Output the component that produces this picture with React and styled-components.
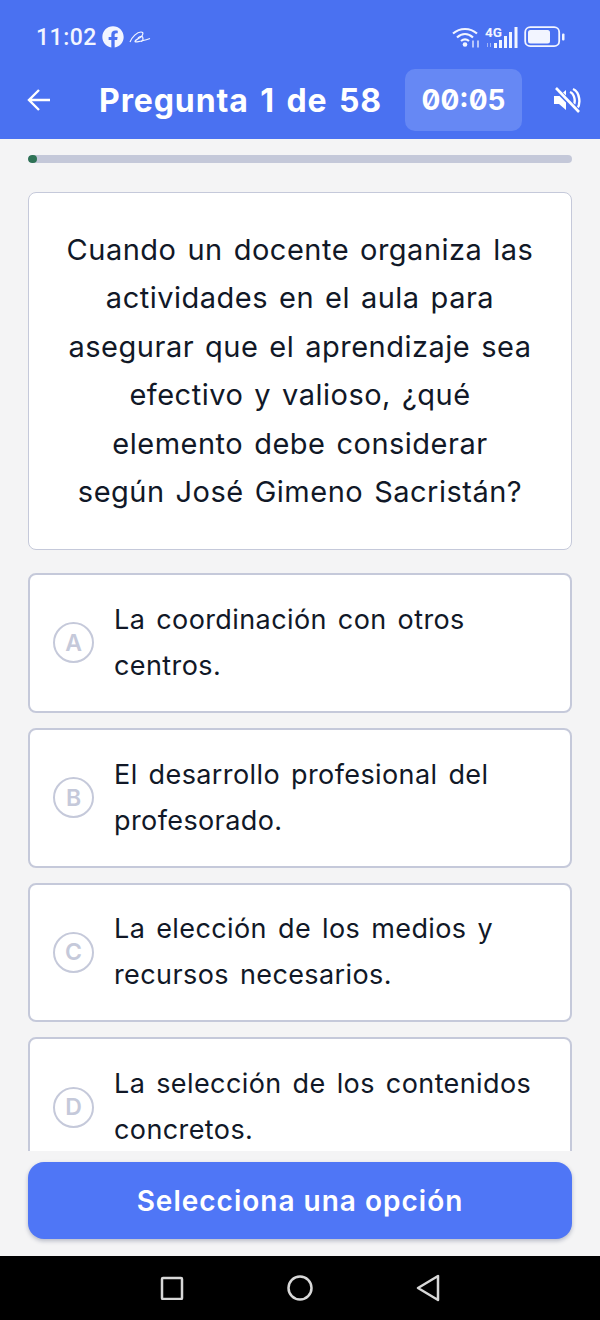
import React from "react";
import styled, { createGlobalStyle } from "styled-components";
import { FaFacebook } from "react-icons/fa";

const Global = createGlobalStyle`
  html, body {
    margin: 0;
    padding: 0;
    background: #f4f4f5;
  }
  * { box-sizing: border-box; }
`;

const Page = styled.div`
  width: 600px;
  height: 1320px;
  display: flex;
  flex-direction: column;
  background: #f4f4f5;
  font-family: Inter, "Liberation Sans", sans-serif;
  overflow: hidden;
`;

const Top = styled.header`
  height: 139px;
  background: #4a71f1;
  color: #fff;
  flex: none;
`;

const StatusBar = styled.div`
  height: 69px;
  padding: 5px 35px 0 36px;
  display: flex;
  align-items: center;
  font-family: Roboto, sans-serif;
  color: #f2f5ff;
`;

const Clock = styled.span`
  font-size: 23px;
  font-weight: 500;
  letter-spacing: 0.5px;
  margin-right: 5px;
`;

const StatusRight = styled.div`
  margin-left: auto;
  display: flex;
  align-items: center;
  gap: 5px;
`;

const TitleRow = styled.div`
  height: 62px;
  display: flex;
  align-items: center;
  padding-left: 26px;
`;

const Title = styled.h1`
  margin: 0 0 0 47px;
  width: 306px;
  font-size: 32px;
  font-weight: 700;
  letter-spacing: 0.9px;
  word-spacing: 3px;
  white-space: nowrap;
`;

const Timer = styled.div`
  width: 117px;
  height: 62px;
  border-radius: 10px;
  background: #6688f4;
  display: flex;
  align-items: center;
  justify-content: center;
  font-size: 28px;
  font-weight: 700;
  font-variant-numeric: slashed-zero;
  font-feature-settings: "zero" 1;
`;

const Sound = styled.div`
  margin-left: 31px;
  display: flex;
`;

const Body = styled.main`
  flex: 1;
  min-height: 0;
  padding: 16px 28px 0;
  overflow: hidden;
`;

const Progress = styled.div`
  height: 8px;
  border-radius: 4px;
  background: #c4c8d9;
  overflow: hidden;
  margin-bottom: 29px;
`;

const ProgressFill = styled.div`
  height: 100%;
  background: #2f7356;
  border-radius: 4px;
`;

const Question = styled.section`
  height: 358px;
  background: #fff;
  border: 1px solid #c5c9da;
  border-radius: 8px;
  display: flex;
  align-items: center;
  justify-content: center;
  text-align: center;
  padding: 0 36px;
  font-size: 29px;
  letter-spacing: 0.5px;
  word-spacing: 2.3px;
  line-height: 48.5px;
  color: #111827;
  margin-bottom: 23px;
`;

const Options = styled.div`
  display: flex;
  flex-direction: column;
  gap: 15px;
`;

const Option = styled.div`
  height: 139.8px;
  flex: none;
  background: #fff;
  border: 2.5px solid #c5c9da;
  border-radius: 8px;
  display: flex;
  align-items: center;
  padding: 0 20px 0 23px;
  gap: 20px;
`;

const Letter = styled.span`
  width: 41px;
  height: 41px;
  flex: none;
  border: 2.5px solid #c5c9da;
  border-radius: 50%;
  color: #c5c9da;
  display: flex;
  align-items: center;
  justify-content: center;
  font-size: 23px;
  font-weight: 600;
`;

const OptionText = styled.span`
  font-size: 27px;
  letter-spacing: 0.4px;
  word-spacing: 3px;
  line-height: 46px;
  color: #111827;
`;

const Footer = styled.div`
  height: 105px;
  flex: none;
  padding: 11px 28px 0;
`;

const Submit = styled.button`
  width: 100%;
  height: 77px;
  border: 0;
  border-radius: 16px;
  background: #4f76f6;
  box-shadow: 0 2px 4px rgba(40, 50, 90, 0.3);
  color: #fff;
  font-family: inherit;
  font-size: 28px;
  font-weight: 600;
  letter-spacing: 1px;
`;

const NavBar = styled.nav`
  height: 64px;
  flex: none;
  background: #000;
  display: flex;
  align-items: center;
  justify-content: center;
  gap: 103px;
  padding-bottom: 1px;
`;

const ArrowIcon = () => (
  <svg width="26" height="24" viewBox="0 0 26 24" fill="none" stroke="#fff" strokeWidth="2.4">
    <path d="M24 12H3M13 2L3 12l10 10" />
  </svg>
);

const AliIcon = () => (
  <svg width="22" height="14" viewBox="0 0 22 14" fill="none" stroke="#f2f5ff" strokeWidth="1.2">
    <path d="M1 12C3 7 8 2 12 2c3 0 2 3 0 5-3 2-6 3-6 4.500 0 1 4 .5 15-3" />
    <path d="M9 8c2-2 5-3 5 1 0 2-2 2.500-1 2.500" />
  </svg>
);

const WifiIcon = () => (
  <svg width="28" height="22" viewBox="0 0 28 22" fill="none" stroke="#f2f5ff" strokeWidth="2.2">
    <path d="M1 7.500C8 1.500 18 1.500 25 7.500" />
    <path d="M5 11.500C10 7 16 7 21 11.500" />
    <path d="M9 15c3-2.500 5-2.500 8 0" />
    <circle cx="13" cy="18.500" r="2.300" fill="#f2f5ff" stroke="none" />
    <path d="M21 14.500v7M26 14.500v7" strokeWidth="1.300" />
  </svg>
);

const SignalIcon = () => (
  <svg width="34" height="24" viewBox="0 0 34 24" fill="#f2f5ff">
    <rect x="9" y="18" width="3" height="5" />
    <rect x="14" y="15" width="3" height="8" />
    <rect x="19" y="11" width="3" height="12" />
    <rect x="24" y="7" width="3" height="16" />
    <rect x="29.500" y="2" width="3" height="21" />
    <rect x="2" y="18" width="1" height="4" opacity="0.5" />
    <rect x="5" y="18" width="1" height="4" opacity="0.5" />
    <text x="0" y="12" fontFamily="Roboto, sans-serif" fontSize="13.500" fontWeight="700">4G</text>
  </svg>
);

const BatteryIcon = () => (
  <svg width="41" height="22" viewBox="0 0 41 22" fill="none">
    <rect x="1.200" y="1.200" width="34" height="19" rx="5" stroke="#f2f5ff" strokeWidth="1.800" />
    <rect x="4" y="4" width="22" height="13.500" rx="2.500" fill="#f2f5ff" />
    <rect x="38" y="7.500" width="2.500" height="7" rx="1" fill="#f2f5ff" />
  </svg>
);

const MuteIcon = () => (
  <svg width="28" height="26" viewBox="0 0 28 26" fill="none">
    <path d="M1 9h5l7-6v20l-7-6H1z" fill="#fff" />
    <path d="M17 5c5 2 6 11 3 14M20 2c7 3 8 15 4 20" stroke="#fff" strokeWidth="2.400" />
    <path d="M3 2l23 23" stroke="#4a71f1" strokeWidth="5" />
    <path d="M3 1l23 24" stroke="#fff" strokeWidth="2.600" />
  </svg>
);

const SquareIcon = () => (
  <svg width="24" height="24" viewBox="0 0 24 24" fill="none" stroke="#d8d8d8" strokeWidth="2.500">
    <rect x="2" y="2" width="20" height="21" rx="1" />
  </svg>
);

const CircleIcon = () => (
  <svg width="26" height="26" viewBox="0 0 26 26" fill="none" stroke="#d8d8d8" strokeWidth="2.500">
    <circle cx="13" cy="13" r="11.500" />
  </svg>
);

const TriangleIcon = () => (
  <svg width="24" height="28" viewBox="0 0 24 28" fill="none" stroke="#d8d8d8" strokeWidth="2.500" strokeLinejoin="round">
    <path d="M22 2v24L2 14z" />
  </svg>
);

const answers = [
  ["A", "La coordinación con otros centros."],
  ["B", "El desarrollo profesional del profesorado."],
  ["C", "La elección de los medios y recursos necesarios."],
  ["D", "La selección de los contenidos concretos."]
];

export default function App() {
  return (
    <Page>
      <Global />
      <Top>
        <StatusBar>
          <Clock>11:02</Clock>
          <FaFacebook size={22} style={{ marginRight: 5 }} />
          <AliIcon />
          <StatusRight>
            <WifiIcon />
            <SignalIcon />
            <BatteryIcon />
          </StatusRight>
        </StatusBar>
        <TitleRow>
          <ArrowIcon />
          <Title>Pregunta 1 de 58</Title>
          <Timer>00:05</Timer>
          <Sound>
            <MuteIcon />
          </Sound>
        </TitleRow>
      </Top>
      <Body>
        <Progress>
          <ProgressFill style={{ width: `${100 / 58}%` }} />
        </Progress>
        <Question>
          Cuando un docente organiza las actividades en el aula para asegurar que el aprendizaje sea efectivo y valioso, ¿qué elemento debe considerar según José Gimeno Sacristán?
        </Question>
        <Options>
          {answers.map(([letter, text]) => (
            <Option key={letter}>
              <Letter>{letter}</Letter>
              <OptionText>{text}</OptionText>
            </Option>
          ))}
        </Options>
      </Body>
      <Footer>
        <Submit>Selecciona una opción</Submit>
      </Footer>
      <NavBar>
        <SquareIcon />
        <CircleIcon />
        <TriangleIcon />
      </NavBar>
    </Page>
  );
}
